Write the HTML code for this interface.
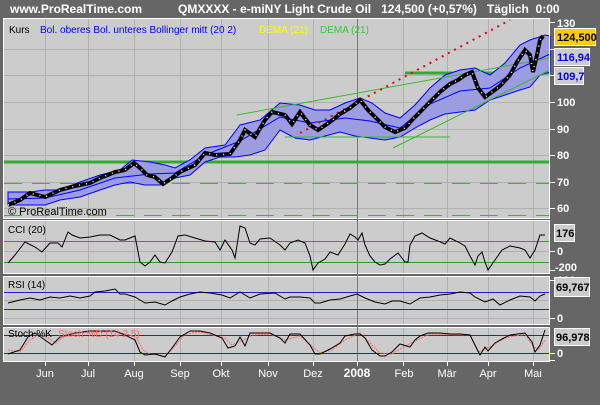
<!DOCTYPE html>
<html><head><meta charset="utf-8"><style>
body{margin:0;background:#666;width:600px;height:400px;overflow:hidden;font-family:"Liberation Sans",sans-serif}
</style></head><body>
<svg width="600" height="400" xmlns="http://www.w3.org/2000/svg" font-family="Liberation Sans, sans-serif">
<rect width="600" height="400" fill="#666"/>
<text x="10" y="13" fill="#fff" font-size="12" font-weight="bold">www.ProRealTime.com</text>
<text x="178" y="13" fill="#fff" font-size="12" font-weight="bold" xml:space="preserve">QMXXXX - e-miNY Light Crude Oil   124,500 (+0,57%)   Täglich  0:00</text>
<rect x="3.5" y="18.5" width="546" height="200" fill="#ccc" stroke="#fff"/>
<rect x="3.5" y="220.5" width="546" height="53" fill="#ccc" stroke="#fff"/>
<rect x="3.5" y="276.5" width="546" height="48" fill="#ccc" stroke="#fff"/>
<rect x="3.5" y="327.5" width="546" height="34" fill="#ccc" stroke="#fff"/>
<g stroke="#b0b0b0" stroke-width="1">
<path d="M45.5 19V218M88.5 19V218M134.5 19V218M180.5 19V218M221.5 19V218M268.5 19V218M313.5 19V218M403.5 19V218M447.5 19V218M488.5 19V218M533.5 19V218"/>
<path d="M45.5 221V273M88.5 221V273M134.5 221V273M180.5 221V273M221.5 221V273M268.5 221V273M313.5 221V273M403.5 221V273M447.5 221V273M488.5 221V273M533.5 221V273"/>
<path d="M45.5 277V324M88.5 277V324M134.5 277V324M180.5 277V324M221.5 277V324M268.5 277V324M313.5 277V324M403.5 277V324M447.5 277V324M488.5 277V324M533.5 277V324"/>
<path d="M45.5 328V361M88.5 328V361M134.5 328V361M180.5 328V361M221.5 328V361M268.5 328V361M313.5 328V361M403.5 328V361M447.5 328V361M488.5 328V361M533.5 328V361"/>
<path d="M4 49.5H549M4 75.5H549M4 102.5H549M4 129.5H549M4 155.5H549M4 182.5H549M4 208.5H549"/>
<path d="M4 251.5H549M4 300.5H549M4 318.5H549"/>
</g>
<path d="M357.5 19V361" stroke="#777"/>
<path d="M4 162H549" stroke="#3a3" stroke-width="3"/>
<path d="M4 183.5H549M4 215.5H549" stroke="#3b3" stroke-dasharray="18 10"/>
<path d="M405 73H550" stroke="#3a3" stroke-width="3"/>
<polygon fill="#9c9ce0" stroke="#00f" points="8,192 30,192 45,190 60,190 80,182 100,175 120,170 132,160 150,162 165,165 175,168 190,160 205,148 225,145 240,125 260,120 280,103 300,105 315,110 330,110 345,103 360,98 372,103 385,113 400,118 415,105 430,88 445,75 460,70 475,68 490,75 505,63 520,45 530,40 545,35 550,36 550,72 540,75 530,87 520,90 505,95 490,100 475,110 460,112 445,114 430,120 415,128 400,137 385,140 370,138 355,136 340,132 325,136 310,140 295,138 280,130 265,150 250,155 235,157 220,157 205,162 190,175 175,178 160,185 145,185 130,182 115,185 100,190 80,197 60,200 45,205 30,205 8,205"/>
<polyline fill="none" stroke="#00f" points="8,199 45,198 80,190 115,178 150,174 175,173 205,155 240,141 280,117 310,123 345,118 370,121 400,128 430,104 460,91 490,88 520,68 550,54"/>
<path d="M237 115L550 58M393 148L550 70M285 137H450" stroke="#3b3" fill="none"/>
<path d="M300 133L510 20" stroke="#e00" stroke-width="2" stroke-dasharray="2 5"/>
<polyline fill="none" stroke="#000" stroke-width="4" points="8,205 20,200 30,193 45,197 60,190 75,186 90,183 100,178 115,172 125,170 134,163 140,168 147,175 155,177 163,184 172,178 180,172 195,165 205,153 215,155 230,154 240,140 245,130 255,137 265,120 272,112 285,115 292,124 300,112 310,125 318,130 330,122 340,114 350,108 360,100 368,110 375,117 385,127 395,132 405,128 412,120 420,112 430,102 440,92 450,84 458,80 465,75 472,72 478,88 485,97 492,92 500,86 510,75 517,62 525,50 530,55 533,72 537,55 540,40 543,36"/>
<polyline fill="none" stroke="#fff" stroke-width="1.5" stroke-dasharray="1 6" points="8,205 20,200 30,193 45,197 60,190 75,186 90,183 100,178 115,172 125,170 134,163 140,168 147,175 155,177 163,184 172,178 180,172 195,165 205,153 215,155 230,154 240,140 245,130 255,137 265,120 272,112 285,115 292,124 300,112 310,125 318,130 330,122 340,114 350,108 360,100 368,110 375,117 385,127 395,132 405,128 412,120 420,112 430,102 440,92 450,84 458,80 465,75 472,72 478,88 485,97 492,92 500,86 510,75 517,62 525,50 530,55 533,72 537,55 540,40 543,36"/>
<text x="9" y="33" font-size="10" fill="#000">Kurs</text>
<text x="40" y="33" font-size="10" fill="#00f">Bol. oberes Bol. unteres Bollinger mitt (20 2)</text>
<text x="259" y="33" font-size="10" fill="#ff0">DEMA (21)</text>
<text x="320" y="33" font-size="10" fill="#3c3">DEMA (21)</text>
<text x="8" y="215" font-size="11" fill="#000">© ProRealTime.com</text>
<path d="M4 241.5H549M4 262.5H549" stroke="#393" stroke-width="1"/>
<polyline fill="none" stroke="#000" points="8,263 15,255 25,242 35,247 42,252 50,243 58,243 62,247 68,232 72,235 80,238 90,237 100,235 110,235 120,240 125,240 135,236 140,262 145,266 150,262 155,255 160,262 165,263 172,252 178,236 185,235 195,238 205,241 215,242 220,250 225,240 232,250 235,258 240,226 245,228 250,243 255,245 260,239 270,238 280,245 285,250 290,243 298,240 305,243 310,256 313,270 318,263 325,259 330,252 338,255 345,244 350,234 355,237 358,240 362,233 365,245 370,256 375,262 380,265 385,264 390,259 398,253 405,262 408,262 410,245 415,236 422,233 430,238 438,241 445,244 450,238 458,242 465,246 470,256 475,265 478,256 482,252 485,262 488,270 495,260 502,250 510,246 520,248 525,250 530,258 535,250 540,235 545,235"/>
<text x="8" y="233" font-size="10">CCI (20)</text>
<path d="M4 292.5H549M4 309.5H549" stroke="#22c"/>
<polyline fill="none" stroke="#000" points="8,303 20,300 30,298 40,300 50,297 60,298 70,296 80,298 90,296 95,292 105,291 115,289 120,294 125,294 135,297 140,300 145,303 155,302 165,305 172,301 180,297 190,294 200,292 210,293 222,295 230,298 240,292 250,298 260,294 275,293 285,299 290,297 300,297 310,298 315,303 320,303 330,300 340,299 350,296 357,294 365,298 375,302 385,304 392,301 400,301 410,304 420,298 430,297 440,295 450,294 460,292 470,293 475,297 485,302 493,299 500,305 510,300 520,296 530,297 535,301 540,296 545,294"/>
<text x="8" y="288" font-size="10">RSI (14)</text>
<path d="M4 335.5H549M4 353.5H549" stroke="#22c"/>
<polyline fill="none" stroke="#f66" stroke-dasharray="2 1" points="8,350 20,352 30,340 40,334 48,338 56,343 65,336 78,333 92,332 115,332 127,334 137,338 143,350 150,354 165,356 175,346 185,334 200,332 225,338 232,345 244,340 252,335 270,334 285,340 300,336 312,346 320,353 332,350 345,340 360,333 370,343 380,353 392,354 405,346 417,340 430,334 470,335 478,352 490,347 505,338 525,334 533,346 538,350 545,340"/>
<polyline fill="none" stroke="#000" points="8,354 20,350 28,337 35,333 45,340 52,345 60,337 75,333 90,331 100,331 115,331 125,335 135,340 140,352 145,355 155,354 165,357 172,348 180,337 190,331 200,331 210,333 222,338 228,348 235,346 240,337 245,346 250,333 260,333 270,333 280,338 285,343 290,334 300,334 310,345 315,354 320,354 330,349 340,343 345,336 355,334 360,334 365,338 372,350 380,356 385,356 392,352 400,344 410,347 415,340 420,336 428,333 440,333 450,334 460,334 470,335 475,345 480,355 485,347 488,351 495,343 502,339 510,335 525,333 532,342 535,352 540,345 545,330"/>
<text x="8" y="337" font-size="10">Stoch %K</text>
<text x="58" y="337" font-size="10" fill="#f66">Stoch %D (14 2 5)</text>
<g stroke="#fff"><path d="M549.5 19V218M549.5 221V273M549.5 277V324M549.5 328V361"/>
<path d="M550 22.5H555M550 49.5H555M550 75.5H555M550 102.5H555M550 129.5H555M550 155.5H555M550 182.5H555M550 208.5H555M550 251.5H555M550 270.5H555M550 280.5H555M550 318.5H555M550 353.5H555M550 360.5H555"/>
<path d="M45.5 362V366M88.5 362V366M134.5 362V366M180.5 362V366M221.5 362V366M268.5 362V366M313.5 362V366M357.5 362V366M403.5 362V366M447.5 362V366M488.5 362V366M533.5 362V366"/></g>
<g fill="#fff" font-size="11" font-weight="bold">
<text x="557" y="27">130</text><text x="557" y="106">100</text><text x="557" y="133">90</text><text x="557" y="159">80</text><text x="557" y="186">70</text><text x="557" y="212">60</text>
<text x="557" y="255">0</text><text x="555" y="271">-200</text><text x="557" y="284">100</text><text x="557" y="322">0</text><text x="557" y="357">0</text>
</g>
<rect x="554.5" y="28.5" width="41" height="17" fill="#fc0" stroke="#fff"/>
<text x="557" y="41" font-size="11" font-weight="bold">124,500</text>
<rect x="554.5" y="48.5" width="35" height="17" fill="#ccc" stroke="#fff"/>
<text x="557" y="61" font-size="11" font-weight="bold" fill="#00f">116,94</text>
<rect x="554.5" y="67.5" width="29" height="17" fill="#ccc" stroke="#fff"/>
<text x="557" y="80" font-size="11" font-weight="bold" fill="#00f">109,7</text>
<rect x="554.5" y="224.5" width="20" height="17" fill="#ccc" stroke="#fff"/>
<text x="556" y="237" font-size="11" font-weight="bold">176</text>
<rect x="554.5" y="277.5" width="35" height="19" fill="#ccc" stroke="#fff"/>
<text x="556" y="291" font-size="11" font-weight="bold">69,767</text>
<rect x="554.5" y="328.5" width="35" height="17" fill="#ccc" stroke="#fff"/>
<text x="556" y="341" font-size="11" font-weight="bold">96,978</text>
<g fill="#fff" font-size="11" text-anchor="middle">
<text x="45" y="377">Jun</text><text x="88" y="377">Jul</text><text x="134" y="377">Aug</text><text x="180" y="377">Sep</text><text x="221" y="377">Okt</text><text x="268" y="377">Nov</text><text x="313" y="377">Dez</text><text x="357" y="377" font-weight="bold" font-size="12">2008</text><text x="404" y="377">Feb</text><text x="447" y="377">Mär</text><text x="488" y="377">Apr</text><text x="533" y="377">Mai</text>
</g>
</svg>
</body></html>
